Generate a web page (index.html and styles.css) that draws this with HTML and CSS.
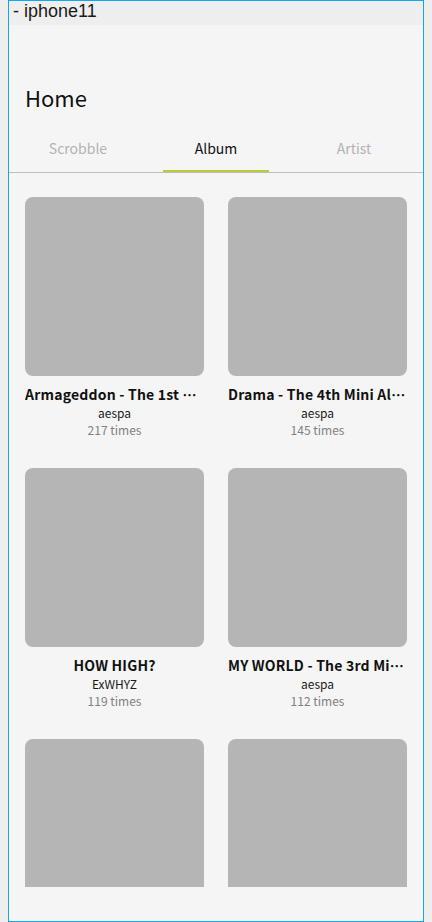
FILE: index.html
```html
<!DOCTYPE html>
<html lang="en">
<head>
<meta charset="utf-8">
<title>Home</title>
<link rel="stylesheet" href="styles.css">
</head>
<body>
<div class="frame">
  <div class="device-label">- iphone11</div>
  <div class="screen">
    <header class="appbar">
      <h1 class="title">Home</h1>
    </header>
    <nav class="tabs">
      <div class="tab"><span class="tab-text">Scrobble</span><span class="tab-bar"></span></div>
      <div class="tab active"><span class="tab-text">Album</span><span class="tab-bar"></span></div>
      <div class="tab"><span class="tab-text">Artist</span><span class="tab-bar"></span></div>
    </nav>
    <main class="scroll">
      <div class="grid">
        <div class="card">
          <div class="cover"></div>
          <div class="name">Armageddon - The 1st Album</div>
          <div class="artist">aespa</div>
          <div class="count">217 times</div>
        </div>
        <div class="card">
          <div class="cover"></div>
          <div class="name">Drama - The 4th Mini Album</div>
          <div class="artist">aespa</div>
          <div class="count">145 times</div>
        </div>
        <div class="card">
          <div class="cover"></div>
          <div class="name">HOW HIGH?</div>
          <div class="artist">ExWHYZ</div>
          <div class="count">119 times</div>
        </div>
        <div class="card">
          <div class="cover"></div>
          <div class="name">MY WORLD - The 3rd Mini Album</div>
          <div class="artist">aespa</div>
          <div class="count">112 times</div>
        </div>
        <div class="card">
          <div class="cover"></div>
          <div class="name">Savage - The 1st Mini Album</div>
          <div class="artist">aespa</div>
          <div class="count">98 times</div>
        </div>
        <div class="card">
          <div class="cover"></div>
          <div class="name">Girls - The 2nd Mini Album</div>
          <div class="artist">aespa</div>
          <div class="count">87 times</div>
        </div>
      </div>
    </main>
    <div class="bottom-space"></div>
  </div>
</div>
</body>
</html>
```

FILE: styles.css
```css
html, body {
  margin: 0;
  padding: 0;
  background: #eeeeee;
}

body {
  padding: 0 8px;
}

.frame {
  box-sizing: border-box;
  width: 416px;
  height: 922px;
  border: 1px solid #12a8f0;
  display: flex;
  flex-direction: column;
  overflow: hidden;
}

.device-label {
  height: 24px;
  flex: none;
  overflow: hidden;
  background: #eeeeee;
  color: #1a1a1a;
  font-family: "Liberation Sans", Arial, sans-serif;
  font-size: 18px;
  line-height: 21px;
  padding-left: 4px;
  padding-top: 0;
}

.screen {
  flex: 1;
  display: flex;
  flex-direction: column;
  background: #f5f5f5;
  font-family: "Noto Sans CJK JP", "Noto Sans", sans-serif;
  min-height: 0;
}

.appbar {
  padding: 56px 16px 0;
}

.title {
  margin: 0;
  font-size: 22px;
  font-weight: 400;
  line-height: 33px;
  color: #111111;
}

.tabs {
  display: grid;
  grid-template-columns: 1fr 1fr 1fr;
  margin-top: 24px;
  border-bottom: 1px solid #bdbdbd;
}

.tab {
  display: flex;
  flex-direction: column;
  align-items: stretch;
  text-align: center;
}

.tab-text {
  font-size: 14px;
  line-height: 20px;
  color: #b3b3b3;
}

.tab-bar {
  display: block;
  height: 2px;
  margin: 12px 16px 0;
  background: transparent;
}

.tab.active .tab-text {
  color: #111111;
}

.tab.active .tab-bar {
  background: #c0ca33;
}

.scroll {
  height: 714px;
  flex: none;
  overflow: hidden;
}

.grid {
  display: grid;
  grid-template-columns: 1fr 1fr;
  column-gap: 24px;
  row-gap: 30px;
  padding: 24px 16px 0;
}

.card {
  min-width: 0;
  text-align: center;
}

.cover {
  height: 179px;
  border-radius: 8px;
  background: #b5b5b5;
}

.name {
  margin-top: 8px;
  font-size: 14px;
  font-weight: 700;
  line-height: 20px;
  letter-spacing: 0.2px;
  color: #111111;
  white-space: nowrap;
  overflow: hidden;
  text-overflow: ellipsis;
}

.artist {
  font-size: 12px;
  line-height: 18px;
  color: #1a1a1a;
}

.count {
  font-size: 12px;
  line-height: 16px;
  color: #808080;
}

.bottom-space {
  flex: 1;
}
```
